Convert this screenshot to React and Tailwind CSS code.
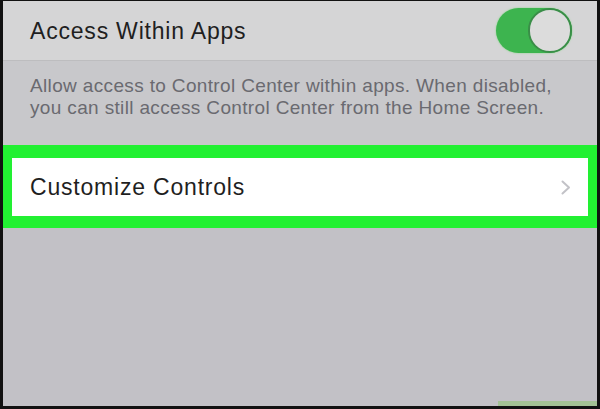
export default function App() {
  return (
    <div
      className="w-[600px] h-[409px] bg-[#111] pt-[1px] pl-[3px] pr-[3px] pb-[3px] overflow-hidden"
      style={{ fontFamily: '"Liberation Sans", Arial, sans-serif' }}
    >
      <div className="h-full flex flex-col bg-[#c3c2c7]">
        <div className="h-[60px] bg-[#d5d5d6] flex items-center justify-between pl-[27px] pr-[25px] border-b border-[#bdbdbf]">
          <span className="text-[23px] text-[#1f1f1f] tracking-[0.8px] pt-[1px]">Access Within Apps</span>
          <div className="w-[76px] h-[45px] rounded-full bg-[#3db44f] relative shadow-[0_0_2px_#7fd67f]">
            <div className="absolute right-0 top-0 w-[44px] h-[45px] rounded-full bg-[#dcdcdc] border-[2px] border-[#3a8e48]"></div>
          </div>
        </div>
        <div className="h-[84px] bg-[#c8c8cb] pl-[27px] pt-[14px] text-[19px] leading-[22px] tracking-[0.35px] text-[#6a6a70]">
          <p>Allow access to Control Center within apps. When disabled,</p>
          <p>you can still access Control Center from the Home Screen.</p>
        </div>
        <div className="bg-[#22f032] pt-[13px] pb-[12px] pl-[9px] pr-[9px]">
          <div className="h-[58px] bg-white flex items-center justify-between pl-[18px] pr-[17px]">
            <span className="text-[23px] text-[#1f1f1f] tracking-[0.8px] pt-[1px]">Customize Controls</span>
            <svg width="10" height="15" viewBox="0 0 10 15" fill="none">
              <path d="M1.5 1.5 L8 7.5 L1.5 13.5" stroke="#c2c2c7" strokeWidth="2" strokeLinecap="round" strokeLinejoin="round" />
            </svg>
          </div>
        </div>
        <div className="flex-1 bg-[#c2c1c6] flex flex-col justify-end items-end">
          <div className="w-[99px] h-[5px] bg-[#a3c295]"></div>
        </div>
      </div>
    </div>
  );
}
